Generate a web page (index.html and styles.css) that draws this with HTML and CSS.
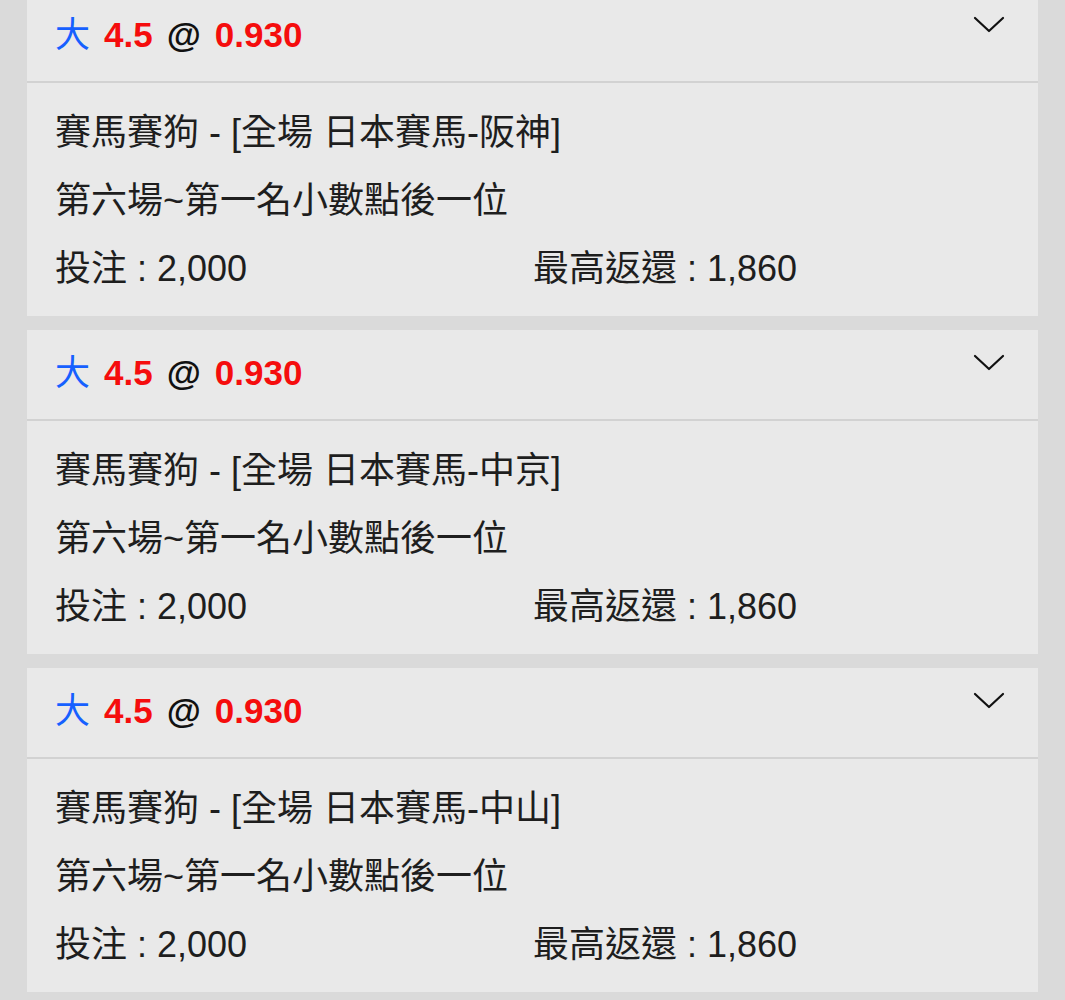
FILE: index.html
```html
<!DOCTYPE html>
<html lang="zh-Hant">
<head>
<meta charset="utf-8">
<title>注單</title>
<link rel="stylesheet" href="styles.css">
</head>
<body>
<div class="list">
  <div class="card">
    <div class="card-head">
      <div class="odds"><span class="side">大</span><span class="red">4.5</span><span class="at">@</span><span class="red">0.930</span></div>
      <svg class="chev" width="32" height="18" viewBox="0 0 32 18"><polyline points="2,2 16,15 30,2" fill="none" stroke="#111" stroke-width="2.2" stroke-linecap="round" stroke-linejoin="round"/></svg>
    </div>
    <div class="card-body">
      <div class="line">賽馬賽狗 - [全場 日本賽馬-阪神]</div>
      <div class="line">第六場~第一名小數點後一位</div>
      <div class="line row"><span class="stake">投注 : 2,000</span><span class="ret">最高返還 : 1,860</span></div>
    </div>
  </div>
  <div class="card">
    <div class="card-head">
      <div class="odds"><span class="side">大</span><span class="red">4.5</span><span class="at">@</span><span class="red">0.930</span></div>
      <svg class="chev" width="32" height="18" viewBox="0 0 32 18"><polyline points="2,2 16,15 30,2" fill="none" stroke="#111" stroke-width="2.2" stroke-linecap="round" stroke-linejoin="round"/></svg>
    </div>
    <div class="card-body">
      <div class="line">賽馬賽狗 - [全場 日本賽馬-中京]</div>
      <div class="line">第六場~第一名小數點後一位</div>
      <div class="line row"><span class="stake">投注 : 2,000</span><span class="ret">最高返還 : 1,860</span></div>
    </div>
  </div>
  <div class="card">
    <div class="card-head">
      <div class="odds"><span class="side">大</span><span class="red">4.5</span><span class="at">@</span><span class="red">0.930</span></div>
      <svg class="chev" width="32" height="18" viewBox="0 0 32 18"><polyline points="2,2 16,15 30,2" fill="none" stroke="#111" stroke-width="2.2" stroke-linecap="round" stroke-linejoin="round"/></svg>
    </div>
    <div class="card-body">
      <div class="line">賽馬賽狗 - [全場 日本賽馬-中山]</div>
      <div class="line">第六場~第一名小數點後一位</div>
      <div class="line row"><span class="stake">投注 : 2,000</span><span class="ret">最高返還 : 1,860</span></div>
    </div>
  </div>
</div>
</body>
</html>
```
FILE: styles.css
```css
html, body {
  margin: 0;
  padding: 0;
  background: #dadada;
  font-family: "Liberation Sans", "Noto Sans CJK TC", sans-serif;
  color: #1e1e1e;
}
.list {
  margin-top: -8px;
  padding: 0 27px;
  display: flex;
  flex-direction: column;
  gap: 14px;
}
.card {
  background: #e9e9e9;
}
.card-head {
  box-sizing: border-box;
  height: 91px;
  border-bottom: 2px solid #d2d2d2;
  display: flex;
  align-items: center;
  justify-content: space-between;
  padding: 0 33px 10px 28px;
}
.odds {
  display: flex;
  align-items: baseline;
  gap: 14px;
  font-size: 35px;
  font-weight: bold;
  color: #111;
}
.side {
  color: #1660ff;
  font-weight: normal;
}
.red {
  color: #f50d0d;
}
.chev {
  align-self: flex-start;
  margin-top: 24px;
}
.card-body {
  padding: 16px 28px 13px;
}
.line {
  font-size: 36px;
  height: 68px;
  line-height: 68px;
  white-space: pre;
}
.row {
  display: flex;
}
.stake {
  width: 478px;
}
```
